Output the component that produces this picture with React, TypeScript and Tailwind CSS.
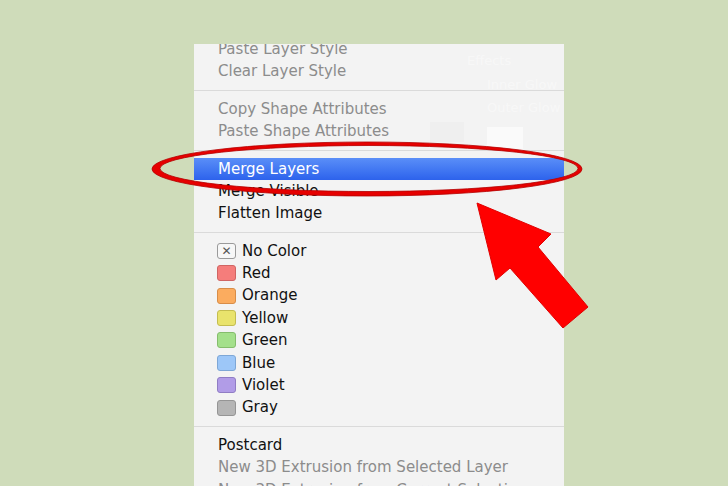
import React from 'react';

type Row =
  | { kind: 'item'; label: string; dim?: boolean; active?: boolean }
  | { kind: 'sep' }
  | { kind: 'color'; label: string; swatch: string; border: string; none?: boolean };

const rows: Row[] = [
  { kind: 'item', label: 'Paste Layer Style', dim: true },
  { kind: 'item', label: 'Clear Layer Style', dim: true },
  { kind: 'sep' },
  { kind: 'item', label: 'Copy Shape Attributes', dim: true },
  { kind: 'item', label: 'Paste Shape Attributes', dim: true },
  { kind: 'sep' },
  { kind: 'item', label: 'Merge Layers', active: true },
  { kind: 'item', label: 'Merge Visible' },
  { kind: 'item', label: 'Flatten Image' },
  { kind: 'sep' },
  { kind: 'color', label: 'No Color', swatch: 'bg-[#f7f7f7]', border: 'border-[#9a9a9a]', none: true },
  { kind: 'color', label: 'Red', swatch: 'bg-[#f57d7b]', border: 'border-[#d06563]' },
  { kind: 'color', label: 'Orange', swatch: 'bg-[#fbac5f]', border: 'border-[#d88d48]' },
  { kind: 'color', label: 'Yellow', swatch: 'bg-[#e9e36c]', border: 'border-[#c4bd50]' },
  { kind: 'color', label: 'Green', swatch: 'bg-[#a4e08b]', border: 'border-[#85bd6d]' },
  { kind: 'color', label: 'Blue', swatch: 'bg-[#9dc7f8]', border: 'border-[#7ea7d6]' },
  { kind: 'color', label: 'Violet', swatch: 'bg-[#b19ce7]', border: 'border-[#907dc4]' },
  { kind: 'color', label: 'Gray', swatch: 'bg-[#b5b5b5]', border: 'border-[#959595]' },
  { kind: 'sep' },
  { kind: 'item', label: 'Postcard' },
  { kind: 'item', label: 'New 3D Extrusion from Selected Layer', dim: true },
  { kind: 'item', label: 'New 3D Extrusion from Current Selection', dim: true },
];

function MenuRow({ row }: { row: Row }) {
  if (row.kind === 'sep') {
    return (
      <div className="h-[15px] flex items-center">
        <div className="h-px w-full bg-[#dadada]" />
      </div>
    );
  }
  if (row.kind === 'color') {
    return (
      <div className="h-[22.4px] flex items-center pl-[23px] gap-[6px] text-[#111]">
        <span
          className={`w-[19px] h-[16px] rounded-[3px] border ${row.swatch} ${row.border} flex items-center justify-center text-[12px] leading-none text-[#555]`}
        >
          {row.none ? '✕' : null}
        </span>
        <span>{row.label}</span>
      </div>
    );
  }
  if (row.active) {
    return (
      <div className="h-[22.4px] flex items-center pl-[24px] bg-linear-to-b from-[#5a8ef8] to-[#2d62ec] text-white">
        {row.label}
      </div>
    );
  }
  return (
    <div className={`h-[22.4px] flex items-center pl-[24px] whitespace-nowrap ${row.dim ? 'text-[#8c8c8c]' : 'text-[#111]'}`}>
      {row.label}
    </div>
  );
}

export default function App() {
  return (
    <div className="relative w-[728px] h-[486px] overflow-hidden bg-[#cfdcba] font-['DejaVu_Sans',sans-serif] text-[15px]">
      <div className="relative ml-[194px] mt-[44px] w-[370px] h-[442px] overflow-hidden bg-[#f3f3f3]">
        {/* faint palette showing through the menu */}
        <div className="absolute left-[273px] top-[7px] text-[13px] text-white/40">Effects</div>
        <div className="absolute left-[293px] top-[31px] text-[13px] text-white/40">Inner Glow</div>
        <div className="absolute left-[293px] top-[54px] text-[13px] text-white/40">Outer Glow</div>
        <div className="absolute left-[236px] top-[78px] w-[34px] h-[20px] bg-[#efefef]" />
        <div className="absolute left-[293px] top-[83px] w-[36px] h-[24px] bg-white/60" />

        <div className="relative mt-[-6px]">
          {rows.map((r, i) => (
            <MenuRow key={i} row={r} />
          ))}
        </div>
      </div>

      <svg className="absolute inset-0" width="728" height="486" viewBox="0 0 728 486">
        <path
          fillRule="evenodd"
          fill="#e60000"
          stroke="#b40000"
          strokeWidth="0.8"
          d="M152,169 a215,27 0 1,0 430,0 a215,27 0 1,0 -430,0 Z M160,168.5 a209,23 0 1,0 418,0 a209,23 0 1,0 -418,0 Z"
        />
        <polygon
          fill="#ff0000"
          stroke="#e00000"
          strokeWidth="1"
          points="477,203 496,280 510,268 563,328 588,307 538,247 551,234"
        />
      </svg>
    </div>
  );
}
